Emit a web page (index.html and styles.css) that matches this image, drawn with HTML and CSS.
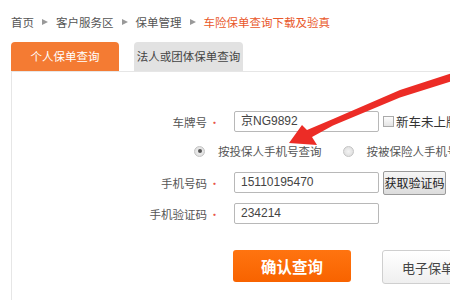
FILE: index.html
```html
<!DOCTYPE html>
<html lang="zh-CN">
<head>
    <meta charset="UTF-8">
    <title>车险保单查询下载及验真</title>
    <link rel="stylesheet" href="styles.css">
</head>
<body>
    <div class="crumbs">
        <span>首页</span><i class="sep"></i><span>客户服务区</span><i class="sep"></i><span>保单管理</span><i class="sep"></i><span class="current">车险保单查询下载及验真</span>
    </div>

    <div class="tabs">
        <div class="tab active">个人保单查询</div>
        <div class="tab">法人或团体保单查询</div>
    </div>

    <div class="panel">
        <div class="row">
            <label class="label">车牌号<em>•</em></label>
            <div class="input">京NG9892</div>
            <span class="check"></span><span class="check-text">新车未上牌</span>
        </div>
        <div class="row radios">
            <span class="radio checked"></span><span class="radio-text">按投保人手机号查询</span>
            <span class="radio second"></span><span class="radio-text">按被保险人手机号查询</span>
        </div>
        <div class="row gap">
            <label class="label">手机号码<em>•</em></label>
            <div class="input">15110195470</div>
            <button class="code-btn">获取验证码</button>
        </div>
        <div class="row gap">
            <label class="label">手机验证码<em>•</em></label>
            <div class="input">234214</div>
        </div>
        <div class="actions">
            <button class="btn-confirm">确认查询</button>
            <button class="btn-plain">电子保单验真</button>
        </div>
    </div>

    <svg class="arrow" width="450" height="300" viewBox="0 0 450 300">
        <polygon fill="#ec2c26" points="452,73 400,90 333,119 307,130 302,125 289,143 317,145 312,137 333,125.5 400,97.5 452,81"/>
    </svg>
</body>
</html>
```

FILE: styles.css
```css
html, body {
    margin: 0;
    padding: 0;
    background: #fff;
    overflow: hidden;
}
body {
    font-family: "Noto Sans CJK SC", "Liberation Sans", sans-serif;
    font-size: 11.5px;
    color: #555;
    position: relative;
    width: 450px;
    height: 300px;
}
.crumbs {
    display: flex;
    align-items: center;
    padding: 13px 0 0 11px;
    height: 18px;
    line-height: 18px;
    color: #555;
}
.crumbs .sep {
    width: 0;
    height: 0;
    border-left: 6px solid #999;
    border-top: 3.5px solid transparent;
    border-bottom: 3.5px solid transparent;
    margin: 0 8px 0 8px;
}
.crumbs .current {
    color: #e9582b;
}
.tabs {
    display: flex;
    gap: 15px;
    margin: 11px 0 0 11px;
}
.tab {
    width: 109px;
    height: 29px;
    line-height: 29px;
    text-align: center;
    background: #e2e2e2;
    color: #444;
    border-radius: 4px 4px 0 0;
}
.tab.active {
    width: 108px;
    background: #f47b33;
    color: #fff;
}
.panel {
    box-sizing: border-box;
    margin-left: 11px;
    width: 439px;
    height: 229px;
    overflow: hidden;
    border-top: 1px solid #e6e6e6;
    border-left: 1px solid #e6e6e6;
    padding-top: 39px;
}
.row {
    display: flex;
    align-items: center;
    height: 21px;
}
.row.gap {
    margin-top: 10px;
}
.label {
    flex-shrink: 0;
    width: 208px;
    text-align: right;
    color: #555;
}
.label em {
    font-style: normal;
    color: #e8554a;
    font-size: 11px;
    margin-left: 2px;
}
.input {
    flex-shrink: 0;
    box-sizing: border-box;
    width: 145px;
    height: 21px;
    margin-left: 14px;
    border: 1px solid #b8b8b8;
    border-radius: 2px;
    padding-left: 6px;
    line-height: 19px;
    font-family: "Liberation Sans", sans-serif;
    font-size: 12px;
    color: #444;
}
.check {
    flex-shrink: 0;
    box-sizing: border-box;
    width: 11px;
    height: 11px;
    margin-left: 4px;
    border: 1px solid #aaa;
    background: linear-gradient(#fdfdfd, #e4e4e4);
}
.check-text {
    margin-left: 2px;
    font-size: 12.5px;
    color: #333;
    white-space: nowrap;
}
.radios {
    margin-top: 8px;
    height: 22px;
    padding-left: 182px;
}
.radio {
    flex-shrink: 0;
    box-sizing: border-box;
    width: 11px;
    height: 11px;
    border-radius: 50%;
    border: 1px solid #c4c4c4;
    background: radial-gradient(#f4f4f4, #d8d8d8);
    position: relative;
}
.radio.checked::after {
    content: "";
    position: absolute;
    left: 2.5px;
    top: 2.5px;
    width: 4px;
    height: 4px;
    border-radius: 50%;
    background: #555;
}
.radio.second {
    margin-left: 21px;
}
.radio-text {
    margin-left: 13px;
    font-size: 11.5px;
    white-space: nowrap;
    color: #555;
}
.code-btn {
    flex-shrink: 0;
    box-sizing: border-box;
    width: 63px;
    height: 24px;
    margin-left: 4px;
    padding: 0;
    border: 1px solid #9a9a9a;
    border-radius: 2px;
    background: linear-gradient(#f6f6f6, #dcdcdc);
    font-family: "Noto Sans CJK SC", sans-serif;
    font-size: 12px;
    color: #222;
}
.actions {
    display: flex;
    gap: 31px;
    margin-top: 26px;
    padding-left: 221px;
}
.btn-confirm {
    width: 118px;
    height: 32px;
    border: none;
    border-radius: 3px;
    background: linear-gradient(#ff7410, #f86300);
    color: #fff;
    font-family: "Noto Sans CJK SC", sans-serif;
    font-size: 15.5px;
    font-weight: bold;
    flex-shrink: 0;
}
.btn-plain {
    box-sizing: border-box;
    width: 118px;
    height: 34px;
    border: 1px solid #cfcfcf;
    border-radius: 3px;
    background: linear-gradient(#ffffff, #efefef);
    color: #444;
    font-family: "Noto Sans CJK SC", sans-serif;
    font-size: 13px;
    flex-shrink: 0;
}
.arrow {
    position: absolute;
    left: 0;
    top: 0;
    pointer-events: none;
}
```
